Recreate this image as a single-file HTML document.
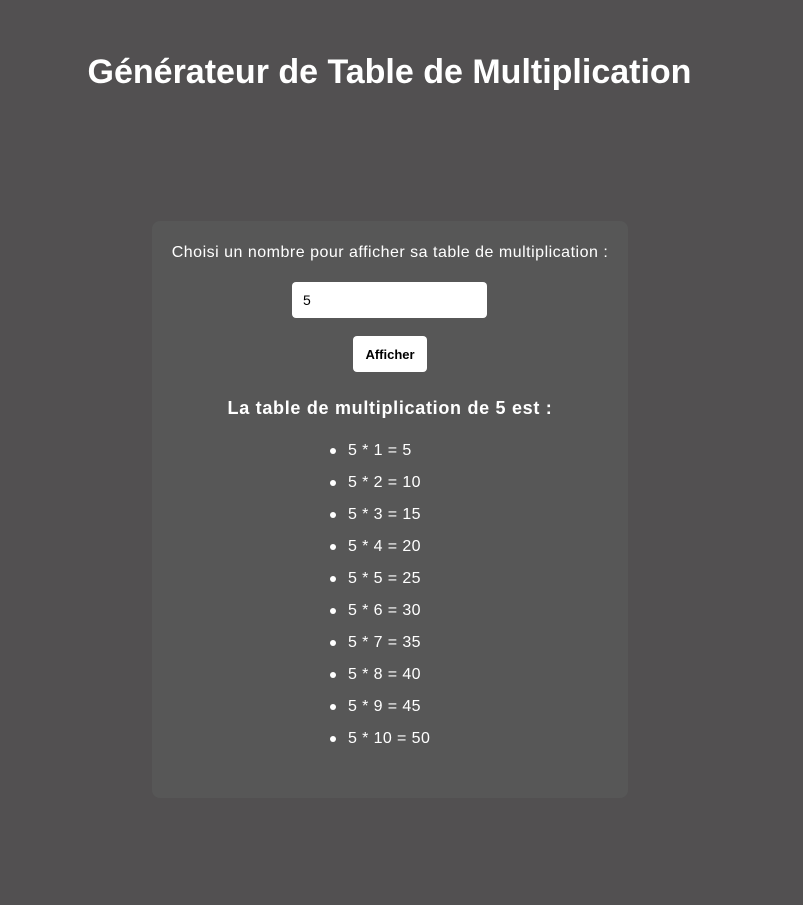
<!DOCTYPE html>
<html><head><meta charset="utf-8"><style>
html,body{margin:0;padding:0;width:803px;height:905px;background:#525051;font-family:"Liberation Sans",sans-serif;color:#fff;overflow:hidden}
h1{position:absolute;left:0;width:779px;top:50px;margin:0;text-align:center;font-size:34px;font-weight:bold;line-height:44px;letter-spacing:0px}
.card{position:absolute;left:152px;top:221px;width:476px;height:577px;background:#575757;border-radius:8px}
.lbl{position:absolute;left:0;width:476px;top:243px;text-align:center;font-size:16px;line-height:20px;letter-spacing:0.5px}
.inp{position:absolute;left:292px;top:282px;width:195px;height:36px;background:#fff;border-radius:4px;color:#000;font-size:14px;line-height:36px;box-sizing:border-box;padding-left:11px}
.btn{position:absolute;left:353px;top:336px;width:74px;height:36px;background:#fff;border-radius:4px;color:#000;font-size:13px;font-weight:bold;line-height:37px;text-align:center}
h2{position:absolute;left:152px;width:476px;top:396px;margin:0;text-align:center;font-size:18px;font-weight:bold;line-height:24px;letter-spacing:0.7px}
.li{position:absolute;left:348px;font-size:16px;line-height:20px;letter-spacing:0.4px}
.li:before{content:"";position:absolute;left:-18px;top:7px;width:6px;height:6px;border-radius:50%;background:#fff}
</style></head><body>
<h1>Générateur de Table de Multiplication</h1>
<div class="card"></div>
<div class="lbl" style="left:152px">Choisi un nombre pour afficher sa table de multiplication :</div>
<div class="inp">5</div>
<div class="btn">Afficher</div>
<h2>La table de multiplication de 5 est :</h2>
<div class="li" style="top:441px">5 * 1 = 5</div>
<div class="li" style="top:473px">5 * 2 = 10</div>
<div class="li" style="top:505px">5 * 3 = 15</div>
<div class="li" style="top:537px">5 * 4 = 20</div>
<div class="li" style="top:569px">5 * 5 = 25</div>
<div class="li" style="top:601px">5 * 6 = 30</div>
<div class="li" style="top:633px">5 * 7 = 35</div>
<div class="li" style="top:665px">5 * 8 = 40</div>
<div class="li" style="top:697px">5 * 9 = 45</div>
<div class="li" style="top:729px">5 * 10 = 50</div>
</body></html>
